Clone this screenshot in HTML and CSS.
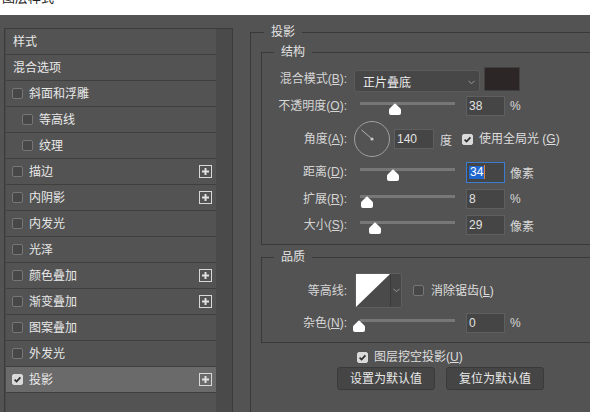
FILE: index.html
```html
<!DOCTYPE html>
<html lang="zh-CN">
<head>
<meta charset="utf-8">
<title>图层样式</title>
<link rel="stylesheet" href="styles.css">
</head>
<body>
<div class="titlebar"><span class="title">图层样式</span></div>
<div class="main">
  <div class="list">
    <div class="items">
      <div class="item">样式</div>
      <div class="item">混合选项</div>
      <div class="item c"><span class="cb"></span>斜面和浮雕</div>
      <div class="item c sub"><span class="cb"></span>等高线</div>
      <div class="item c sub"><span class="cb"></span>纹理</div>
      <div class="item c"><span class="cb"></span>描边<svg class="plus" width="13" height="13" viewBox="0 0 13 13"><rect x="0.5" y="0.5" width="12" height="12" fill="none" stroke="#d8d8d8"/><rect x="3" y="5.5" width="7" height="2" fill="#e0e0e0"/><rect x="5.5" y="3" width="2" height="7" fill="#e0e0e0"/></svg></div>
      <div class="item c"><span class="cb"></span>内阴影<svg class="plus" width="13" height="13" viewBox="0 0 13 13"><rect x="0.5" y="0.5" width="12" height="12" fill="none" stroke="#d8d8d8"/><rect x="3" y="5.5" width="7" height="2" fill="#e0e0e0"/><rect x="5.5" y="3" width="2" height="7" fill="#e0e0e0"/></svg></div>
      <div class="item c"><span class="cb"></span>内发光</div>
      <div class="item c"><span class="cb"></span>光泽</div>
      <div class="item c"><span class="cb"></span>颜色叠加<svg class="plus" width="13" height="13" viewBox="0 0 13 13"><rect x="0.5" y="0.5" width="12" height="12" fill="none" stroke="#d8d8d8"/><rect x="3" y="5.5" width="7" height="2" fill="#e0e0e0"/><rect x="5.5" y="3" width="2" height="7" fill="#e0e0e0"/></svg></div>
      <div class="item c"><span class="cb"></span>渐变叠加<svg class="plus" width="13" height="13" viewBox="0 0 13 13"><rect x="0.5" y="0.5" width="12" height="12" fill="none" stroke="#d8d8d8"/><rect x="3" y="5.5" width="7" height="2" fill="#e0e0e0"/><rect x="5.5" y="3" width="2" height="7" fill="#e0e0e0"/></svg></div>
      <div class="item c"><span class="cb"></span>图案叠加</div>
      <div class="item c"><span class="cb"></span>外发光</div>
      <div class="item c sel"><span class="cb on"><svg width="9" height="9" viewBox="0 0 9 9"><path d="M1.6 4.6 L3.6 6.6 L7.4 2.4" fill="none" stroke="#2e2e2e" stroke-width="1.7"/></svg></span>投影<svg class="plus" width="13" height="13" viewBox="0 0 13 13"><rect x="0.5" y="0.5" width="12" height="12" fill="none" stroke="#d8d8d8"/><rect x="3" y="5.5" width="7" height="2" fill="#e0e0e0"/><rect x="5.5" y="3" width="2" height="7" fill="#e0e0e0"/></svg></div>
    </div>
    <div class="scroll"></div>
  </div>

  <fieldset class="outer">
    <legend>投影</legend>

    <fieldset class="grp">
      <legend>结构</legend>
      <div class="row r26">
        <span class="lbl">混合模式(<u>B</u>):</span>
        <div class="select"><span>正片叠底</span><svg width="7" height="5" viewBox="0 0 7 5"><path d="M0.5 0.8 L3.5 3.8 L6.5 0.8" fill="none" stroke="#9a9a9a" stroke-width="1"/></svg></div>
        <div class="swatch"></div>
      </div>
      <div class="row r28">
        <span class="lbl">不透明度(<u>O</u>):</span>
        <div class="slider"><div class="track"></div><svg class="thumb" style="left:29px" width="12" height="12" viewBox="0 0 12 12"><path d="M6 0.3 L11.4 5.6 Q12 6.2 12 7 L12 10 Q12 12 10 12 L2 12 Q0 12 0 10 L0 7 Q0 6.2 0.6 5.6 Z" fill="#fff"/></svg></div>
        <div class="num">38</div>
        <span class="unit">%</span>
      </div>
      <div class="row r38">
        <span class="lbl">角度(<u>A</u>):</span>
        <svg class="dial" width="36" height="36" viewBox="0 0 36 36"><circle cx="18" cy="18" r="17.5" fill="none" stroke="#a0a0a0" stroke-width="1"/><path d="M18 18 L7.4 8.8" stroke="#b4b4b4" stroke-width="1"/><circle cx="18" cy="18" r="1.6" fill="#c8c8c8"/></svg>
        <div class="num n40">140</div>
        <span class="unit u6">度</span>
        <span class="cb on gl"><svg width="9" height="9" viewBox="0 0 9 9"><path d="M1.6 4.6 L3.6 6.6 L7.4 2.4" fill="none" stroke="#2e2e2e" stroke-width="1.7"/></svg></span>
        <span class="txt">使用全局光 (<u>G</u>)</span>
      </div>
      <div class="row r28">
        <span class="lbl">距离(<u>D</u>):</span>
        <div class="slider"><div class="track"></div><svg class="thumb" style="left:27px" width="12" height="12" viewBox="0 0 12 12"><path d="M6 0.3 L11.4 5.6 Q12 6.2 12 7 L12 10 Q12 12 10 12 L2 12 Q0 12 0 10 L0 7 Q0 6.2 0.6 5.6 Z" fill="#fff"/></svg></div>
        <div class="num focus"><span class="selt">34</span><span class="caret"></span></div>
        <span class="unit">像素</span>
      </div>
      <div class="row r26">
        <span class="lbl">扩展(<u>R</u>):</span>
        <div class="slider"><div class="track"></div><svg class="thumb" style="left:1px" width="12" height="12" viewBox="0 0 12 12"><path d="M6 0.3 L11.4 5.6 Q12 6.2 12 7 L12 10 Q12 12 10 12 L2 12 Q0 12 0 10 L0 7 Q0 6.2 0.6 5.6 Z" fill="#fff"/></svg></div>
        <div class="num">8</div>
        <span class="unit">%</span>
      </div>
      <div class="row r26">
        <span class="lbl">大小(<u>S</u>):</span>
        <div class="slider"><div class="track"></div><svg class="thumb" style="left:9px" width="12" height="12" viewBox="0 0 12 12"><path d="M6 0.3 L11.4 5.6 Q12 6.2 12 7 L12 10 Q12 12 10 12 L2 12 Q0 12 0 10 L0 7 Q0 6.2 0.6 5.6 Z" fill="#fff"/></svg></div>
        <div class="num">29</div>
        <span class="unit">像素</span>
      </div>
    </fieldset>

    <fieldset class="grp quality">
      <legend>品质</legend>
      <div class="row r37">
        <span class="lbl">等高线:</span>
        <div class="contour">
          <svg class="prev" width="34" height="33" viewBox="0 0 34 33"><rect width="34" height="33" fill="#4a4a4a"/><path d="M0 0 H34 L0 33 Z" fill="#ffffff"/></svg>
          <div class="cdd"><svg width="7" height="5" viewBox="0 0 7 5"><path d="M0.5 0.8 L3.5 3.8 L6.5 0.8" fill="none" stroke="#9a9a9a" stroke-width="1"/></svg></div>
        </div>
        <span class="cb aa"></span>
        <span class="txt">消除锯齿(<u>L</u>)</span>
      </div>
      <div class="row r28">
        <span class="lbl">杂色(<u>N</u>):</span>
        <div class="slider"><div class="track"></div><svg class="thumb" style="left:-7px" width="12" height="12" viewBox="0 0 12 12"><path d="M6 0.3 L11.4 5.6 Q12 6.2 12 7 L12 10 Q12 12 10 12 L2 12 Q0 12 0 10 L0 7 Q0 6.2 0.6 5.6 Z" fill="#fff"/></svg></div>
        <div class="num">0</div>
        <span class="unit">%</span>
      </div>
    </fieldset>

    <div class="knock">
      <span class="cb on"><svg width="9" height="9" viewBox="0 0 9 9"><path d="M1.6 4.6 L3.6 6.6 L7.4 2.4" fill="none" stroke="#2e2e2e" stroke-width="1.7"/></svg></span>
      <span class="txt">图层挖空投影(<u>U</u>)</span>
    </div>
    <div class="buttons">
      <button class="btn">设置为默认值</button>
      <button class="btn">复位为默认值</button>
    </div>
  </fieldset>
</div>
</body>
</html>
```

FILE: styles.css
```css
html, body {
  margin: 0;
  padding: 0;
}
body {
  width: 590px;
  height: 412px;
  overflow: hidden;
  background: #535353;
  font-family: "Liberation Sans", "Noto Sans CJK SC", sans-serif;
  font-size: 12px;
  color: #dcdcdc;
}
u {
  text-decoration: underline;
  text-underline-offset: 1px;
}

.titlebar {
  height: 15px;
  background: #ffffff;
  overflow: hidden;
}
.title {
  display: block;
  margin: -10px 0 0 2px;
  font-size: 13px;
  line-height: 15px;
  color: #222222;
}

.main {
  display: flex;
  align-items: flex-start;
  padding: 10px 0 0 4px;
  height: 387px;
  overflow: hidden;
}

/* left style list */
.list {
  display: flex;
  flex-shrink: 0;
  margin-top: 3px;
  height: 384px;
  box-sizing: border-box;
  border: 1px solid #3b3b3b;
  border-bottom: none;
  padding-left: 1px;
  background: #4a4a4a;
}
.items {
  width: 210px;
  background: #535353;
}
.scroll {
  width: 16px;
  background: #4a4a4a;
}
.item {
  height: 25px;
  border-bottom: 1px solid #3f3f3f;
  display: flex;
  align-items: center;
  padding-left: 7px;
  color: #e8e8e8;
  line-height: 14px;
}
.item.c {
  padding-left: 6px;
}
.item.sub {
  padding-left: 16px;
}
.item.sel {
  background: #6a6a6a;
}
.plus {
  margin-left: auto;
  margin-right: 4px;
  display: block;
}

.cb {
  width: 11px;
  height: 11px;
  box-sizing: border-box;
  border: 1px solid #767676;
  border-radius: 2px;
  background: #474747;
  margin-right: 6px;
  flex-shrink: 0;
  display: flex;
  align-items: center;
  justify-content: center;
}
.cb.on {
  background: #dadada;
  border-color: #dadada;
}
.cb svg {
  display: block;
}

/* right panel */
fieldset {
  margin: 0;
  padding: 0;
  border: 1px solid #393939;
  min-width: 0;
}
legend {
  padding: 0 7px;
  line-height: 14px;
  font-size: 12px;
  color: #e2e2e2;
}
.outer {
  flex-shrink: 0;
  margin-left: 17px;
  padding-left: 10px;
  width: 340px;
  height: 387px;
  box-sizing: border-box;
  border-right: none;
  border-bottom: none;
}
.outer > legend {
  margin-left: 3px;
}
.grp {
  margin-top: 6px;
  padding: 7px 0 6px 0;
  border-right: none;
}
.grp > legend {
  margin-left: 12px;
}
.quality {
  margin-top: 5px;
  padding: 8px 0 5px 0;
}

.row {
  display: flex;
  align-items: center;
}
.r26 { height: 26px; }
.r28 { height: 28px; }
.r37 { height: 37px; }
.r38 { height: 38px; }

.lbl {
  width: 85px;
  flex-shrink: 0;
  text-align: right;
  line-height: 14px;
  color: #d6d6d6;
}

.select {
  margin-left: 7px;
  margin-top: 4px;
  width: 126px;
  height: 22px;
  box-sizing: border-box;
  border: 1px solid #5b5b5b;
  border-radius: 3px;
  background: #474747;
  display: flex;
  align-items: center;
  justify-content: space-between;
  padding: 0 4px 0 8px;
  color: #ececec;
}
.select svg {
  display: block;
  margin-top: 2px;
}
.swatch {
  margin-left: 4px;
  width: 36px;
  height: 24px;
  box-sizing: border-box;
  background: #2c2627;
  border: 1px solid #404040;
}

.slider {
  position: relative;
  margin-left: 13px;
  width: 95px;
  height: 14px;
  flex-shrink: 0;
}
.track {
  margin-top: 3px;
  height: 3px;
  background: #777777;
}
.thumb {
  position: absolute;
  top: 4px;
  display: block;
}

.num {
  margin-left: 11px;
  width: 39px;
  height: 20px;
  box-sizing: border-box;
  border: 1px solid #5f5f5f;
  background: #454545;
  padding-left: 2px;
  line-height: 18px;
  color: #e2e2e2;
  display: flex;
  align-items: center;
  flex-shrink: 0;
}
.num.n40 {
  margin-left: 4px;
  width: 40px;
}
.num.focus {
  height: 21px;
  border-color: #3c7bd2;
}
.selt {
  background: #1f66cf;
  color: #ffffff;
  line-height: 13px;
  padding: 0 1px;
}
.caret {
  width: 1px;
  height: 14px;
  background: #d9873e;
}
.unit {
  margin-left: 5px;
  color: #d8d8d8;
}
.unit.u6 {
  margin-left: 6px;
}
.dial {
  margin-left: 7px;
  display: block;
  flex-shrink: 0;
}
.cb.gl {
  margin-left: 10px;
}
.txt {
  color: #dedede;
  line-height: 14px;
}

.contour {
  margin-left: 8px;
  width: 47px;
  height: 35px;
  box-sizing: border-box;
  border: 1px solid #5e5e5e;
  border-radius: 2px;
  display: flex;
  background: #474747;
}
.prev {
  display: block;
}
.cdd {
  flex: 1;
  border-left: 1px solid #3a3a3a;
  display: flex;
  align-items: center;
  justify-content: center;
}
.cdd svg {
  display: block;
}
.cb.aa {
  margin-left: 11px;
  margin-right: 7px;
}

.knock {
  display: flex;
  align-items: center;
  height: 20px;
  margin-top: 4px;
  margin-left: 96px;
}
.buttons {
  display: flex;
  gap: 11px;
  margin-left: 76px;
}
.btn {
  width: 98px;
  height: 23px;
  box-sizing: border-box;
  border: 1px solid #3a3a3a;
  border-radius: 3px;
  background: #454545;
  color: #e8e8e8;
  font-family: "Liberation Sans", "Noto Sans CJK SC", sans-serif;
  font-size: 12px;
  line-height: 20px;
  padding: 0;
  text-align: center;
}
```
